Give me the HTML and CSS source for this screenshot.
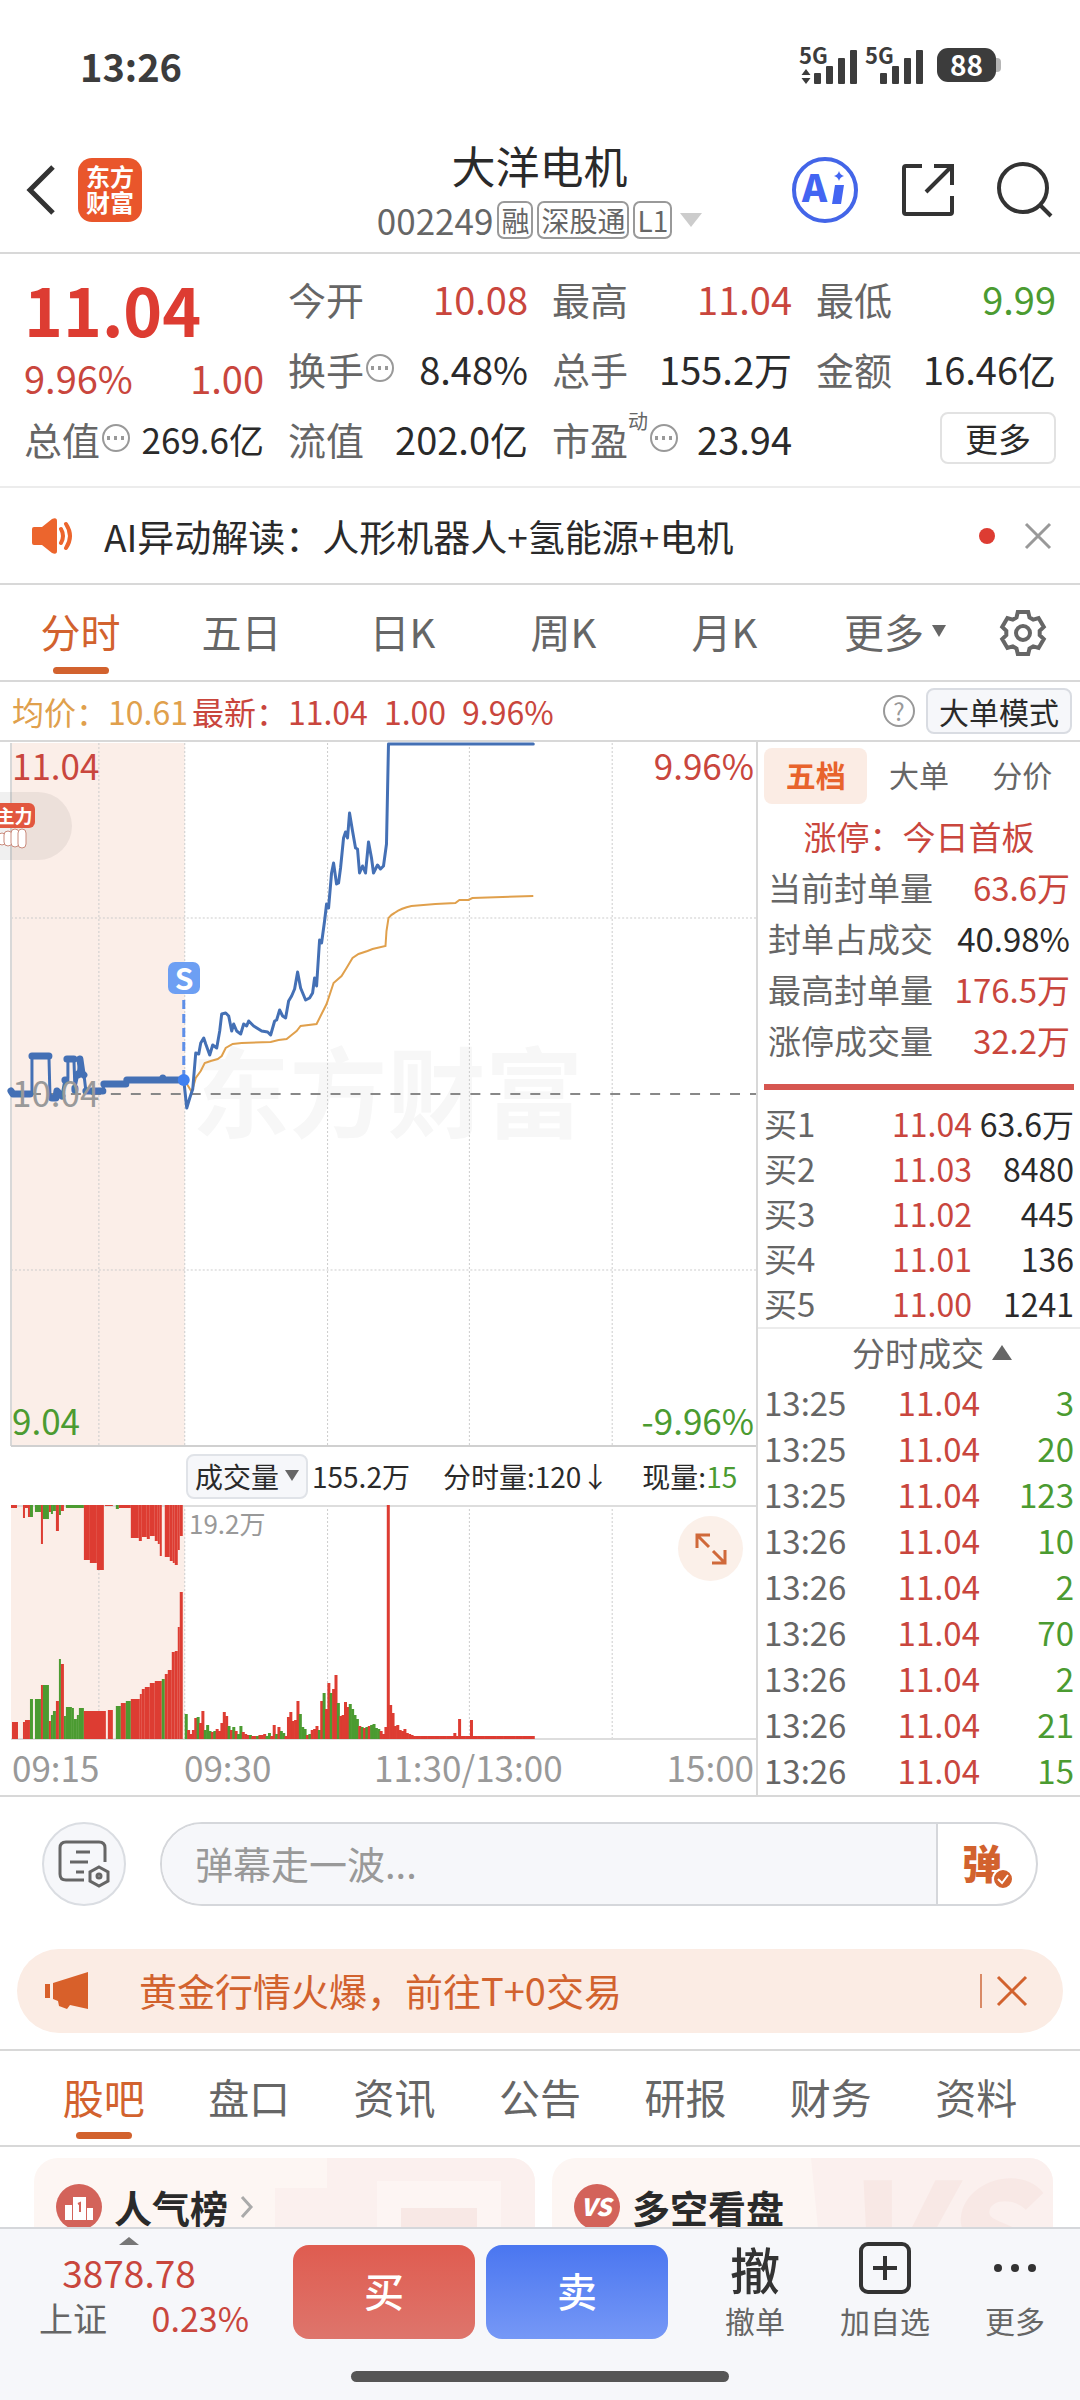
FILE: index.html
```html
<!DOCTYPE html>
<html lang="zh-CN">
  <head>
    <meta charset="UTF-8" />
    <meta name="viewport" content="width=device-width, initial-scale=1.0" />
    <title>大洋电机 002249</title>
    <link rel="stylesheet" href="styles.css">
  </head>
  <body>
    <div class="status">
      <span class="clock">13:26</span>
      <div class="status-icons">
        <svg width="58" height="40" viewBox="0 0 58 40" fill="#3c3c3c">
          <text x="0" y="19" class="net">5G</text>
          <path d="M7 24l4.500 6h-9zM7 39l4.500-6h-9z" />
          <rect x="15" y="28" width="7" height="11" rx="1" />
          <rect x="27" y="21" width="7" height="18" rx="1" />
          <rect x="39" y="13" width="7" height="26" rx="1" />
          <rect x="51" y="5" width="7" height="34" rx="1" />
        </svg>
        <svg width="58" height="40" viewBox="0 0 58 40" fill="#3c3c3c">
          <text x="0" y="19" class="net">5G</text>
          <rect x="15" y="28" width="7" height="11" rx="1" />
          <rect x="27" y="21" width="7" height="18" rx="1" />
          <rect x="39" y="13" width="7" height="26" rx="1" />
          <rect x="51" y="5" width="7" height="34" rx="1" />
        </svg>
        <span class="battery">88</span>
      </div>
    </div>

    <header class="header">
      <div class="header-side">
        <button class="icon-btn" aria-label="返回">
          <svg width="30" height="52" viewBox="0 0 30 52"><path d="M27 3L4 26l23 23" fill="none" stroke="#333" stroke-width="5" /></svg>
        </button>
        <a class="logo" href="#">东方<br>财富</a>
      </div>
      <div class="title">
        <h1>大洋电机</h1>
        <div class="code">
          <span>002249</span>
          <span class="tag">融</span>
          <span class="tag">深股通</span>
          <span class="tag">L1</span>
          <svg width="22" height="14" viewBox="0 0 22 14"><path d="M0 0h22L11 14z" fill="#ccc" /></svg>
        </div>
      </div>
      <div class="header-side header-right">
        <button class="icon-btn" aria-label="AI">
          <svg width="68" height="68" viewBox="0 0 68 68">
            <circle cx="34" cy="34" r="31" fill="none" stroke="#4365e8" stroke-width="4" />
            <text x="11" y="46" class="ai">A</text>
            <path d="M44 29h9l-3 19h-9z" fill="#4365f2" />
            <path d="M48 15q1 4 5 5q-4 1-5 5q-1-4-5-5q4-1 5-5z" fill="#4365f2" />
          </svg>
        </button>
        <button class="icon-btn" aria-label="分享">
          <svg width="54" height="54" viewBox="0 0 54 54" fill="none" stroke="#333" stroke-width="4">
            <path d="M21 3H5q-2 0-2 2v44q0 2 2 2h44q2 0 2-2V33M33 3h18v19M51 3L25 29" />
          </svg>
        </button>
        <button class="icon-btn" aria-label="搜索">
          <svg width="56" height="56" viewBox="0 0 56 56" fill="none" stroke="#333" stroke-width="4">
            <circle cx="26" cy="26" r="24" /><path d="M43 43l11 11" />
          </svg>
        </button>
      </div>
    </header>

    <section class="quote">
      <div class="quote-col">
        <div class="price up">11.04</div>
        <div class="change up"><span>9.96%</span><span>1.00</span></div>
        <div class="item"><span class="label">总值<i class="dots"></i></span><span class="small">269.6亿</span></div>
      </div>
      <div class="quote-col">
        <div class="item"><span class="label">今开</span><span class="up">10.08</span></div>
        <div class="item"><span class="label">换手<i class="dots"></i></span><span>8.48%</span></div>
        <div class="item"><span class="label">流值</span><span>202.0亿</span></div>
      </div>
      <div class="quote-col">
        <div class="item"><span class="label">最高</span><span class="up">11.04</span></div>
        <div class="item"><span class="label">总手</span><span>155.2万</span></div>
        <div class="item"><span class="label">市盈<sup>动</sup><i class="dots"></i></span><span>23.94</span></div>
      </div>
      <div class="quote-col">
        <div class="item"><span class="label">最低</span><span class="down">9.99</span></div>
        <div class="item"><span class="label">金额</span><span>16.46亿</span></div>
        <div class="item item-end"><button class="more-btn">更多</button></div>
      </div>
    </section>

    <section class="notice">
      <svg width="42" height="36" viewBox="0 0 42 36">
        <path d="M2 9h8L20 1q5-2 5 2v30q0 4-5 2L10 27H2q-2 0-2-2V11q0-2 2-2z" fill="#ec652d" />
        <path d="M29 11q4 7 0 14M34 6q8 12 0 24" fill="none" stroke="#ec652d" stroke-width="4" stroke-linecap="round" />
      </svg>
      <a class="notice-text" href="#">AI异动解读：人形机器人+氢能源+电机</a>
      <span class="red-dot"></span>
      <button class="icon-btn" aria-label="关闭">
        <svg width="28" height="28" viewBox="0 0 28 28"><path d="M2 2l24 24M26 2L2 26" stroke="#999" stroke-width="3" /></svg>
      </button>
    </section>

    <nav class="periods">
      <button class="period active">分时</button>
      <button class="period">五日</button>
      <button class="period">日K</button>
      <button class="period">周K</button>
      <button class="period">月K</button>
      <button class="period period-more">更多<svg width="14" height="12" viewBox="0 0 14 12"><path d="M0 0h14L7 12z" fill="#666" /></svg></button>
      <button class="period period-set" aria-label="设置">
        <svg width="48" height="48" viewBox="-24 -24 48 48" fill="none" stroke="#666" stroke-width="4">
          <path d="M-6.500-15.500L-5.200-21H5.200L6.500-15.500L10.200-13.400L15.600-15L20.800-6L16.700-2.100V2.100L20.800 6L15.600 15L10.200 13.400L6.500 15.500L5.200 21H-5.200L-6.500 15.500L-10.200 13.400L-15.600 15L-20.800 6L-16.700 2.100V-2.100L-20.800-6L-15.600-15L-10.200-13.400Z" />
          <circle r="7" />
        </svg>
      </button>
    </nav>

    <div class="latest">
      <span class="avg">均价：10.61</span>
      <span class="up">最新：11.04</span>
      <span class="up">1.00</span>
      <span class="up">9.96%</span>
      <button class="help" aria-label="说明">?</button>
      <button class="mode-btn">大单模式</button>
    </div>

    <main class="board">
      <div class="charts">
        <div class="price-chart">
          <svg viewBox="0 0 757 705" preserveAspectRatio="none">
            <rect x="11" y="1" width="174" height="703" fill="#fbeee8" />
            <text x="192" y="388" class="watermark">东方财富</text>
            <g stroke="#ccc" stroke-dasharray="2 2">
              <path d="M99 1V704M185 1V704M328 1V704M470 1V704M613 1V704" />
              <path d="M11 176H757M11 528H757" />
            </g>
            <path d="M11 1V704" stroke="#d8d8d8" stroke-width="2" />
            <path d="M11 704H757" stroke="#d0d0d0" stroke-width="2" />
            <path d="M11 352H757" stroke="#888" stroke-width="2" stroke-dasharray="10 10" />
            <path d="M184 258V338" stroke="#5e8fe8" stroke-width="3" stroke-dasharray="9 5" />
            <path fill="none" stroke="#e0a04c" stroke-width="2" d="M186 340L192 350L196 336L201 329L205 321L211 319L218 317L222 314L226 306L233 302L242 301L271 300L279 298L287 297L292 293L297 289L301 284L317 282L322 272L327 262L334 241L342 234L347 226L353 216L359 212L368 209L373 207L386 204L387 189L389 176Q391 173 395 171Q402 166 412 164L436 162L456 161L460 158L469 158L473 156L534 154" />
            <g fill="none" stroke="#4470b5" stroke-linejoin="round" stroke-linecap="round">
              <path stroke-width="3" d="M11 349L12 352H32V314H49L50 352L52 356L62 354L65 338L68 336V317H74L75 346L78 332L81 317L82 331L84 332L86 349H103L104 342H126L127 338H184" />
              <path stroke-width="7" d="M11 349L13 352H30M32 314H49M52 356H56L57 349L62 354M65 338H66M67 317H74M75 346V348M78 332V333M80 317L82 331L84 333M86 349H103M104 342H126M127 338H163V336M165 338H184" />
              <path stroke-width="3" d="M184 338L187 366L190 356L193 347L196 311L199 312L201 301L204 296L206 302L210 313L213 303L217 306L220 289L222 272L226 271L229 274L232 289L234 282L237 289L241 292L244 282L247 284L249 279L254 284L262 289L268 290L271 293L275 279L277 278L280 268L283 274L286 276L289 259L292 254L295 247L298 230L301 246L306 258L310 256L313 251L315 236L317 244L320 198L322 201L325 179L327 162L329 166L332 131L334 121L337 142L339 141L341 126L344 96L346 90L348 96L350 71L353 89L356 106L358 107L360 131L363 124L366 131L369 100L372 116L374 131L378 123L381 127L384 124L387 102L389 2H534" />
            </g>
            <circle cx="184" cy="338" r="6" fill="#4080f0" />
          </svg>
          <span class="axis axis-tl up">11.04</span>
          <span class="axis axis-tr up">9.96%</span>
          <span class="axis axis-mid">10.04</span>
          <span class="axis axis-bl down">9.04</span>
          <span class="axis axis-br down">-9.96%</span>
          <span class="mark-s">S</span>
          <button class="main-force" aria-label="主力">
            <span>主力</span>
            <svg width="30" height="22" viewBox="0 0 30 22" fill="#fff" stroke="#c98a7c" stroke-width="1">
              <rect x="0" y="5" width="8" height="12" rx="4" /><rect x="6" y="3" width="8" height="15" rx="4" />
              <rect x="13" y="1" width="8" height="18" rx="4" /><rect x="20" y="1" width="8" height="19" rx="4" />
            </svg>
          </button>
        </div>

        <div class="volume-head">
          <div class="select-box">
            <select aria-label="指标"><option>成交量</option></select>
            <svg width="14" height="11" viewBox="0 0 14 11"><path d="M0 0h14L7 11z" fill="#666" /></svg>
          </div>
          <span class="volume-total">155.2万</span>
          <span class="volume-min">分时量:120↓</span>
          <span>现量:<b class="down">15</b></span>
        </div>

        <div class="volume-chart">
          <svg id="volume" viewBox="0 0 757 235" preserveAspectRatio="none">
            <rect x="11" y="0" width="174" height="234" fill="#fbeee8" />
            <path d="M99 0V234M185 0V234M328 0V234M470 0V234M613 0V234" stroke="#ccc" stroke-dasharray="2 2" />
            <path d="M11 1H757M11 234H757" stroke="#ddd" stroke-width="2" />
          </svg>
          <span class="volume-max">19.2万</span>
          <button class="expand" aria-label="全屏">
            <svg width="32" height="32" viewBox="0 0 32 32" fill="none" stroke="#d0693a" stroke-width="3"><path d="M2 15V2h13M2 2l12 12M30 17v13H17M30 30L18 18" /></svg>
          </button>
        </div>

        <div class="time-axis">
          <span>09:15</span><span>09:30</span><span>11:30/13:00</span><span>15:00</span>
        </div>
      </div>

      <aside class="side">
        <div class="side-tabs">
          <button class="side-tab active">五档</button>
          <button class="side-tab">大单</button>
          <button class="side-tab">分价</button>
        </div>
        <p class="limit up">涨停：今日首板</p>
        <table class="seal">
          <tr><th>当前封单量</th><td class="up">63.6万</td></tr>
          <tr><th>封单占成交</th><td>40.98%</td></tr>
          <tr><th>最高封单量</th><td class="up">176.5万</td></tr>
          <tr><th>涨停成交量</th><td class="up">32.2万</td></tr>
        </table>
        <div class="ratio"></div>
        <table class="bids">
          <tr><th>买1</th><td class="up">11.04</td><td>63.6万</td></tr>
          <tr><th>买2</th><td class="up">11.03</td><td>8480</td></tr>
          <tr><th>买3</th><td class="up">11.02</td><td>445</td></tr>
          <tr><th>买4</th><td class="up">11.01</td><td>136</td></tr>
          <tr><th>买5</th><td class="up">11.00</td><td>1241</td></tr>
        </table>
        <button class="ticks-title">分时成交<svg width="20" height="15" viewBox="0 0 20 15"><path d="M0 15L10 0l10 15z" fill="#666" /></svg></button>
        <table class="ticks">
          <tr><th>13:25</th><td class="up">11.04</td><td class="down">3</td></tr>
          <tr><th>13:25</th><td class="up">11.04</td><td class="down">20</td></tr>
          <tr><th>13:25</th><td class="up">11.04</td><td class="down">123</td></tr>
          <tr><th>13:26</th><td class="up">11.04</td><td class="down">10</td></tr>
          <tr><th>13:26</th><td class="up">11.04</td><td class="down">2</td></tr>
          <tr><th>13:26</th><td class="up">11.04</td><td class="down">70</td></tr>
          <tr><th>13:26</th><td class="up">11.04</td><td class="down">2</td></tr>
          <tr><th>13:26</th><td class="up">11.04</td><td class="down">21</td></tr>
          <tr><th>13:26</th><td class="up">11.04</td><td class="down">15</td></tr>
        </table>
      </aside>
    </main>

    <form class="comment">
      <button type="button" class="comment-set" aria-label="弹幕设置">
        <svg width="54" height="48" viewBox="0 0 54 48" fill="none" stroke="#666" stroke-width="3">
          <path d="M48 22V8q0-6-6-6H9Q3 2 3 8v26q0 6 6 6h18M19 12h14M13 22h18M19 32h8" />
          <path d="M42 27l9 5v9l-9 5l-9-5v-9z" /><circle cx="42" cy="36" r="2" />
        </svg>
      </button>
      <div class="comment-box">
        <input type="text" placeholder="弹幕走一波..." aria-label="弹幕" />
        <button type="button" class="danmu" aria-label="弹幕开关">弹
          <svg width="22" height="22" viewBox="0 0 22 22"><circle cx="11" cy="11" r="10" fill="#d2622e" stroke="#fff" stroke-width="2" /><path d="M6 11l4 4l6-8" fill="none" stroke="#fff" stroke-width="2" /></svg>
        </button>
      </div>
    </form>

    <div class="promo">
      <svg width="44" height="38" viewBox="0 0 44 38" fill="#d8602a"><path d="M0 12h5v14H0zM8 11L43 0v37l-18-4l-3 4l-8-3l-1-5l-5-2z" /></svg>
      <a href="#">黄金行情火爆，前往T+0交易</a>
      <span class="promo-line"></span>
      <button class="icon-btn" aria-label="关闭">
        <svg width="32" height="32" viewBox="0 0 32 32"><path d="M2 2l28 28M30 2L2 30" stroke="#d2622e" stroke-width="3" /></svg>
      </button>
    </div>

    <nav class="tabs">
      <button class="tab active">股吧</button>
      <button class="tab">盘口</button>
      <button class="tab">资讯</button>
      <button class="tab">公告</button>
      <button class="tab">研报</button>
      <button class="tab">财务</button>
      <button class="tab">资料</button>
    </nav>

    <section class="cards">
      <a class="card" href="#">
        <svg class="card-bg" width="260" height="120" viewBox="0 0 260 120">
          <path d="M52 0h208v120H0V30h52z" fill="#fbf0ee" /><path d="M102 23h124v97H102z" fill="#fdf5f3" /><path d="M126 50h76v70h-76z" fill="#f8e8e5" />
        </svg>
        <svg width="46" height="46" viewBox="0 0 46 46">
          <circle cx="23" cy="23" r="23" fill="#d3635a" />
          <path d="M9 21h7v15H9zM17 13h13v23H17zM31 24h6v12h-6z" fill="#fff" /><path d="M22 20l2-1v9" fill="none" stroke="#d3635a" stroke-width="2" />
        </svg>
        <span>人气榜</span>
        <svg width="14" height="24" viewBox="0 0 14 24"><path d="M2 2l9 10l-9 10" fill="none" stroke="#aaa" stroke-width="3" /></svg>
      </a>
      <a class="card" href="#">
        <svg class="card-bg" width="260" height="120" viewBox="0 0 260 120">
          <path d="M18 0h242v120H30z" fill="#fbf0ee" /><text x="44" y="134" class="vs-big">VS</text>
        </svg>
        <svg width="46" height="46" viewBox="0 0 46 46">
          <circle cx="23" cy="23" r="23" fill="#d3635a" /><text x="22" y="32" class="vs">VS</text>
        </svg>
        <span>多空看盘</span>
      </a>
    </section>

    <footer class="footer">
      <div class="footer-row">
        <div class="index">
          <svg width="20" height="8" viewBox="0 0 20 8"><path d="M0 8L10 0l10 8z" fill="#777" /></svg>
          <div class="up">3878.78</div>
          <div class="index-sub"><span>上证</span><span class="up">0.23%</span></div>
        </div>
        <button class="trade buy">买</button>
        <button class="trade sell">卖</button>
        <div class="actions">
          <button class="action"><span class="action-icon">撤</span>撤单</button>
          <button class="action">
            <span class="action-icon"><svg width="52" height="52" viewBox="0 0 52 52" fill="none" stroke="#333" stroke-width="4"><rect x="2" y="2" width="48" height="48" rx="7" /><path d="M26 14v24M14 26h24" /></svg></span>加自选
          </button>
          <button class="action">
            <span class="action-icon"><svg width="44" height="10" viewBox="0 0 44 10" fill="#333"><circle cx="5" cy="5" r="4" /><circle cx="22" cy="5" r="4" /><circle cx="39" cy="5" r="4" /></svg></span>更多
          </button>
        </div>
      </div>
      <div class="home-bar"></div>
    </footer>

    <script>
      const RED = "#dd3c32";
      const GREEN = "#4b9b31";
      const svg = document.getElementById("volume");

      function bar(x, y, w, h, color) {
        const rect = document.createElementNS("http://www.w3.org/2000/svg", "rect");
        rect.setAttribute("x", x);
        rect.setAttribute("y", y);
        rect.setAttribute("width", w);
        rect.setAttribute("height", h);
        rect.setAttribute("fill", color);
        svg.appendChild(rect);
      }

      // call auction: [from, to, height], negative height = green
      const matched = [
        [12, 18, 17], [23, 25, 17], [25, 30, 19], [30, 33, -40], [35, 41, -40],
        [41, 43, 54], [43, 49, -54], [49, 51, 18], [51, 53, -24], [53, 56, -28],
        [56, 59, 38], [59, 61, -80], [61, 64, 75], [64, 66, -23], [66, 72, -32],
        [72, 74, -31], [74, 77, -20], [77, 79, -24], [79, 84, -31], [84, 106, 28],
        [108, 113, 29], [116, 121, -33], [121, 126, 36], [126, 131, -38],
        [131, 140, 40], [140, 142, 45], [142, 145, 50], [145, 150, 52],
        [150, 155, 56], [155, 162, 58], [162, 165, -60], [165, 168, 65],
        [168, 172, 69], [172, 175, 87], [175, 178, 88], [178, 180, 112], [180, 183, 147]
      ];
      const unmatched = [
        [11, 17, 3], [23, 25, 13], [25, 28, 3], [28, 30, 12], [30, 33, -12],
        [35, 41, -7], [41, 43, 39], [43, 49, -14], [49, 51, 7], [51, 53, -9],
        [53, 56, -6], [56, 59, 26], [59, 61, -10], [61, 64, 6], [66, 84, -3],
        [84, 90, 55], [90, 97, 58], [97, 104, 65], [105, 113, 1], [116, 119, -4],
        [119, 131, 3], [131, 139, 33], [139, 142, 36], [142, 147, 32],
        [147, 150, 34], [150, 155, 31], [155, 158, 36], [158, 160, 39],
        [160, 162, 51], [165, 170, 52], [170, 173, 56], [173, 175, 58],
        [175, 178, 60], [178, 180, 45], [180, 183, 31]
      ];
      matched.forEach(([a, b, h]) => bar(a, 234 - Math.abs(h), b - a, Math.abs(h), h > 0 ? RED : GREEN));
      unmatched.forEach(([a, b, h]) => bar(a, 0, b - a, Math.abs(h), h > 0 ? RED : GREEN));

      // one bar for each minute from 09:30
      const minutes = [
        -25, 9, 5, 9, 21, -22, 16, 28, -9, -14, -8, 7, -8, 10, 8, 16, 27, 23, -13, 9,
        -12, 8, -5, -13, 7, 5, 4, -4, 3, 3, -3, 4, 4, 5, -3, -6, 3, 14, -5, 12,
        -8, -6, 3, 22, 27, 18, 19, 38, -25, -12, -10, 4, -5, 9, 10, 13, -9, 38, -46, 30,
        56, -46, 50, 64, -36, 23, 24, 37, 32, -35, -30, -24, -20, 13, -12, 11, -12, 13, -14, -15,
        -11, -10, 8, 5, 12, 234, 34, 26, 13, 14, 9, 8, 10, 6, 5, 4
      ];
      for (let i = minutes.length; i < 147; i++) minutes.push(3);
      minutes[113] = 6;
      minutes[115] = 20;
      minutes[120] = 19;
      minutes.forEach((v, i) => {
        const h = Math.abs(v);
        bar(185 + i * 2.38, 234 - h, 3, h, v > 0 ? RED : GREEN);
      });
    </script>
  </body>
</html>
```
FILE: styles.css
```css
* {
  box-sizing: border-box;
}
body {
  margin: 0;
  height: 100vh;
  display: flex;
  flex-direction: column;
  font-family: "Noto Sans CJK SC", sans-serif;
  color: #2a2a2a;
  background-color: #fff;
}
button,
input,
select {
  font-family: inherit;
  color: inherit;
  background: none;
  border: none;
  padding: 0;
}
a {
  color: inherit;
  text-decoration: none;
}
svg {
  display: block;
  flex-shrink: 0;
}
.up {
  color: #c9463d;
}
.down {
  color: #4b9b31;
}
.icon-btn {
  display: flex;
}

/* status bar */
.status {
  display: flex;
  justify-content: space-between;
  align-items: center;
  height: 130px;
  padding: 0 80px;
  flex-shrink: 0;
}
.clock {
  font-size: 38px;
  font-weight: 700;
  color: #3c3c3c;
}
.status-icons {
  display: flex;
  align-items: center;
  gap: 8px;
}
.status-icons svg {
  overflow: visible;
}
.net {
  font-size: 22px;
  font-weight: 700;
}
.battery {
  position: relative;
  width: 59px;
  height: 34px;
  margin: 0 4px 0 6px;
  border-radius: 11px;
  background-color: #3c3c3c;
  color: #fff;
  font-size: 28px;
  font-weight: 700;
  line-height: 32px;
  text-align: center;
}
.battery::after {
  content: "";
  position: absolute;
  right: -5px;
  top: 10px;
  width: 5px;
  height: 14px;
  border-radius: 0 4px 4px 0;
  background-color: #b5b5b5;
}

/* header */
.header {
  display: flex;
  justify-content: space-between;
  align-items: center;
  height: 124px;
  padding: 0 27px 2px 26px;
  border-bottom: 2px solid #d8d8d8;
  flex-shrink: 0;
}
.header-side {
  display: flex;
  align-items: center;
  gap: 22px;
  width: 260px;
}
.header-right {
  gap: 42px;
  justify-content: flex-end;
}
.logo {
  width: 64px;
  height: 64px;
  padding-top: 5px;
  border-radius: 14px;
  background-color: #e9562b;
  color: #fff;
  font-size: 24px;
  font-weight: 700;
  line-height: 26px;
  text-align: center;
}
.title {
  text-align: center;
}
.title h1 {
  margin: 0;
  font-size: 44px;
  font-weight: 400;
  line-height: 60px;
}
.code {
  display: flex;
  align-items: center;
  gap: 4px;
  font-size: 35px;
  line-height: 50px;
  color: #666;
}
.tag {
  padding: 0 2px;
  border: 2px solid #999;
  border-radius: 7px;
  font-size: 28px;
  line-height: 34px;
}
.code svg {
  margin-left: 4px;
}
.ai {
  font-size: 38px;
  font-weight: 900;
  fill: #4365f2;
}

/* quote */
.quote {
  display: grid;
  grid-template-columns: repeat(4, 1fr);
  gap: 24px;
  padding: 9px 24px 13px;
  border-bottom: 2px solid #ececec;
  font-size: 38px;
  flex-shrink: 0;
}
.price {
  font-size: 66px;
  font-weight: 700;
  line-height: 90px;
  color: #dd3c32;
}
.change {
  display: flex;
  justify-content: space-between;
  line-height: 50px;
}
.item {
  display: flex;
  justify-content: space-between;
  align-items: center;
  height: 70px;
  white-space: nowrap;
}
.item-end {
  justify-content: flex-end;
}
.small {
  font-size: 35px;
}
.label {
  display: flex;
  align-items: center;
  color: #666;
}
.label sup {
  align-self: flex-start;
  font-size: 20px;
  line-height: 20px;
}
.dots {
  width: 28px;
  height: 28px;
  margin-left: 2px;
  border: 2px solid #999;
  border-radius: 50%;
  background: radial-gradient(circle, #999 2px, transparent 2px) 1px 0 / 7px 24px repeat-x;
}
.more-btn {
  width: 116px;
  height: 52px;
  border: 2px solid #e2e2e2;
  border-radius: 8px;
  font-size: 33px;
  line-height: 44px;
}

/* notice */
.notice {
  display: flex;
  align-items: center;
  height: 97px;
  padding: 0 28px 0 32px;
  border-bottom: 2px solid #d8d8d8;
  flex-shrink: 0;
}
.notice-text {
  flex: 1;
  margin-left: 30px;
  font-size: 37px;
}
.red-dot {
  width: 16px;
  height: 16px;
  margin-right: 29px;
  border-radius: 50%;
  background-color: #dd3c32;
}

/* period tabs */
.periods {
  display: flex;
  height: 97px;
  border-bottom: 2px solid #d8d8d8;
  flex-shrink: 0;
}
.period {
  position: relative;
  flex: 161;
  padding-bottom: 4px;
  font-size: 40px;
  color: #666;
}
.period-more {
  display: flex;
  align-items: center;
  justify-content: center;
  gap: 8px;
  flex: 180;
}
.period-set {
  display: flex;
  align-items: center;
  flex: 95;
  padding-bottom: 0;
}
.period-set svg {
  margin-left: 14px;
}
.active {
  color: #d2622e;
}
.period.active::after,
.tab.active::after {
  content: "";
  position: absolute;
  left: calc(50% - 28px);
  bottom: 6px;
  width: 56px;
  height: 7px;
  border-radius: 4px;
  background-color: #d2622e;
}

/* latest price line */
.latest {
  display: flex;
  align-items: center;
  height: 60px;
  padding: 0 8px 0 12px;
  border-bottom: 2px solid #d8d8d8;
  font-size: 32px;
  white-space: nowrap;
  flex-shrink: 0;
}
.latest .up {
  margin-right: 16px;
}
.avg {
  margin-right: 4px;
  color: #e0a04c;
}
.help {
  width: 32px;
  height: 32px;
  margin-left: auto;
  border: 2px solid #999;
  border-radius: 50%;
  color: #999;
  font-size: 24px;
  line-height: 28px;
}
.mode-btn {
  width: 146px;
  height: 46px;
  margin-left: 11px;
  border: 2px solid #d9dce2;
  border-radius: 8px;
  background-color: #f6f7fa;
  font-size: 30px;
  line-height: 40px;
}

/* charts */
.board {
  display: flex;
  border-bottom: 2px solid #d8d8d8;
  flex-shrink: 0;
}
.charts {
  flex: 1;
  min-width: 0;
}
.price-chart,
.volume-chart {
  position: relative;
}
.price-chart svg {
  width: 100%;
}
.price-chart > svg {
  height: 705px;
}
.watermark {
  font-size: 98px;
  font-weight: 700;
  fill: #f7f7f7;
}
.axis {
  position: absolute;
  font-size: 35px;
  line-height: 46px;
}
.axis-tl {
  left: 12px;
  top: 0;
}
.axis-tr {
  right: 2px;
  top: 0;
}
.axis-mid {
  left: 12px;
  top: 327px;
  color: #999;
}
.axis-bl {
  left: 12px;
  bottom: 4px;
}
.axis-br {
  right: 2px;
  bottom: 4px;
}
.mark-s {
  position: absolute;
  left: 168px;
  top: 220px;
  width: 32px;
  height: 32px;
  border-radius: 7px;
  background-color: #6d9ff3;
  color: #fff;
  font-size: 30px;
  font-weight: 700;
  line-height: 31px;
  text-align: center;
}
.main-force {
  position: absolute;
  left: 0;
  top: 50px;
  width: 72px;
  height: 68px;
  border-radius: 0 34px 34px 0;
  background-color: rgba(0, 0, 0, 0.06);
  overflow: hidden;
}
.main-force span {
  display: block;
  width: 41px;
  height: 25px;
  margin-left: -6px;
  border-radius: 6px;
  background-color: #e2573f;
  color: #fff;
  font-size: 18px;
  font-weight: 700;
  line-height: 24px;
}
.main-force svg {
  width: 30px;
  margin-left: -2px;
}
.volume-head {
  display: flex;
  align-items: center;
  height: 58px;
  padding-left: 186px;
  font-size: 28px;
  white-space: nowrap;
}
.volume-head b {
  font-weight: 400;
}
.select-box {
  position: relative;
  width: 122px;
  height: 45px;
  margin-right: 4px;
  border: 2px solid #e0e3e8;
  border-radius: 8px;
  background-color: #f6f7fa;
}
.select-box select {
  width: 100%;
  height: 100%;
  padding-left: 7px;
  appearance: none;
  font-size: 28px;
}
.select-box svg {
  position: absolute;
  right: 7px;
  top: 14px;
  pointer-events: none;
}
.volume-total,
.volume-min {
  margin-right: 33px;
}
.volume-chart > svg {
  width: 100%;
  height: 235px;
}
.volume-max {
  position: absolute;
  left: 189px;
  top: 0;
  color: #999;
  font-size: 26px;
  line-height: 36px;
}
.expand {
  position: absolute;
  right: 13px;
  top: 11px;
  display: flex;
  align-items: center;
  justify-content: center;
  width: 65px;
  height: 65px;
  border-radius: 50%;
  background-color: #fbf0e9;
}
.time-axis {
  display: grid;
  grid-template-columns: 172px 190px 1fr auto;
  height: 55px;
  padding: 0 2px 0 12px;
  color: #999;
  font-size: 35px;
  line-height: 54px;
}

/* side panel */
.side {
  width: 324px;
  padding: 6px 6px 0;
  border-left: 2px solid #d8d8d8;
  font-size: 33px;
}
.side-tabs {
  display: flex;
}
.side-tab {
  flex: 1;
  height: 56px;
  padding-bottom: 4px;
  border-radius: 8px;
  font-size: 30px;
  color: #666;
}
.side-tab.active {
  background-color: #fbece4;
  color: #e8632c;
  font-weight: 700;
}
.limit {
  margin: 7px 0 0;
  line-height: 51px;
  text-align: center;
}
.side table {
  width: 100%;
  border-collapse: collapse;
}
.side th,
.side td {
  padding: 0;
  font-weight: 400;
  text-align: right;
  white-space: nowrap;
}
.side th {
  color: #666;
  text-align: left;
}
.side .seal {
  width: calc(100% - 8px);
  margin: 0 4px;
}
.seal td,
.seal th {
  height: 51px;
  line-height: 51px;
}
.ratio {
  height: 6px;
  margin: 18px 0 11px;
  background-color: #d65650;
}
.bids td,
.bids th {
  height: 45px;
  line-height: 45px;
}
.bids td {
  font-size: 32px;
}
.bids td:last-child {
  width: 102px;
}
.ticks-title {
  display: flex;
  align-items: center;
  justify-content: center;
  gap: 8px;
  width: calc(100% + 12px);
  height: 52px;
  margin: 1px -6px 0;
  padding: 0 0 4px 26px;
  border-top: 2px solid #ececec;
  color: #666;
  font-size: 33px;
}
.ticks td,
.ticks th {
  height: 46px;
  line-height: 46px;
}
.ticks td:last-child {
  width: 94px;
}

/* comment */
.comment {
  display: flex;
  gap: 34px;
  padding: 25px 42px 0;
  flex-shrink: 0;
}
.comment-set {
  display: flex;
  align-items: center;
  justify-content: center;
  width: 84px;
  height: 84px;
  border: 2px solid #dadde2;
  border-radius: 50%;
  background-color: #f6f7fa;
}
.comment-box {
  display: flex;
  flex: 1;
  height: 84px;
  border: 2px solid #d5d7db;
  border-radius: 42px;
  overflow: hidden;
}
.comment-box input {
  flex: 1;
  min-width: 0;
  padding: 0 0 4px 33px;
  background-color: #f6f7fa;
  font-size: 38px;
}
.comment-box input::placeholder {
  color: #999;
}
.danmu {
  position: relative;
  width: 100px;
  padding: 0 10px 4px 0;
  border-left: 2px solid #d5d7db;
  color: #d2622e;
  font-size: 40px;
  font-weight: 900;
}
.danmu svg {
  position: absolute;
  right: 22px;
  top: 44px;
}

/* promo */
.promo {
  display: flex;
  align-items: center;
  height: 84px;
  margin: 43px 17px 16px;
  padding: 0 35px 0 28px;
  border-radius: 42px;
  background-color: #fbece4;
  color: #d2622e;
  font-size: 38px;
  flex-shrink: 0;
}
.promo a {
  flex: 1;
  margin-left: 50px;
  padding-bottom: 4px;
}
.promo-line {
  width: 2px;
  height: 34px;
  margin-right: 14px;
  background-color: #d98a66;
}

/* bottom tabs */
.tabs {
  display: flex;
  height: 98px;
  padding: 0 31px;
  border-top: 2px solid #d8d8d8;
  border-bottom: 2px solid #d8d8d8;
  flex-shrink: 0;
}
.tab {
  position: relative;
  flex: 1;
  padding-bottom: 4px;
  font-size: 41px;
  color: #666;
}
.period.active,
.tab.active {
  color: #d2622e;
}

.cards {
  display: grid;
  grid-template-columns: 1fr 1fr;
  gap: 17px;
  flex: 1;
  min-height: 0;
  padding: 11px 27px 0 34px;
  overflow: hidden;
}
.card {
  position: relative;
  display: flex;
  align-items: center;
  gap: 12px;
  height: 120px;
  padding: 0 0 22px 22px;
  border-radius: 24px;
  background-color: #fdf6f3;
  font-size: 38px;
  font-weight: 700;
  line-height: 44px;
  overflow: hidden;
}
.card-bg {
  position: absolute;
  right: 0;
  top: 0;
}
.card span {
  position: relative;
}
.vs {
  font-size: 24px;
  font-weight: 900;
  font-style: italic;
  fill: #fff;
  text-anchor: middle;
}
.vs-big {
  font-size: 150px;
  font-weight: 900;
  font-style: italic;
  fill: #f8e8e5;
}

/* footer */
.footer {
  height: 173px;
  border-top: 2px solid #d5d7db;
  background-color: #f6f7fa;
  flex-shrink: 0;
}
.footer-row {
  display: flex;
  height: 142px;
}
.index {
  display: flex;
  flex-direction: column;
  align-items: center;
  width: 258px;
  margin-right: 35px;
  padding-top: 8px;
  font-size: 37px;
  line-height: 46px;
}
.index div:first-of-type {
  margin-top: 4px;
}
.index-sub {
  display: flex;
  justify-content: space-between;
  width: 210px;
  margin-left: 30px;
  color: #666;
  font-size: 34px;
}
.trade {
  width: 182px;
  height: 94px;
  margin: 16px 11px 0 0;
  padding-bottom: 4px;
  border-radius: 16px;
  color: #fff;
  font-size: 40px;
  font-weight: 500;
}
.buy {
  background: linear-gradient(#df5c50, #de756c);
}
.sell {
  background: linear-gradient(#4a76f0, #7698f6);
}
.actions {
  display: flex;
  flex: 1;
  padding-left: 11px;
}
.action {
  display: flex;
  flex-direction: column;
  align-items: center;
  flex: 1;
  padding-top: 12px;
  color: #666;
  font-size: 30px;
  line-height: 42px;
}
.action-icon {
  display: flex;
  align-items: center;
  height: 54px;
  margin-bottom: 4px;
  color: #333;
  font-size: 50px;
  font-weight: 500;
}
.home-bar {
  width: 35%;
  height: 11px;
  margin: 0 auto;
  border-radius: 6px;
  background-color: #555;
}
```
